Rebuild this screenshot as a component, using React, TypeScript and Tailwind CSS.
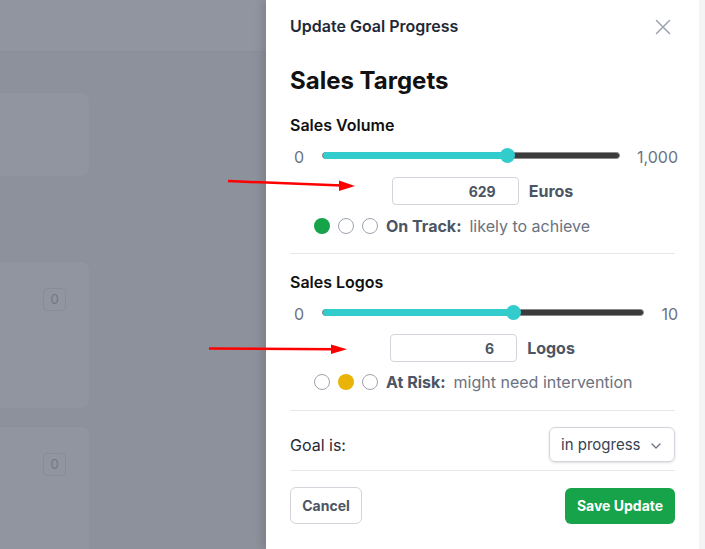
import React from "react";

function Slider({ value, max, maxLabel }: { value: number; max: number; maxLabel: string }) {
  const pct = value / max;
  return (
    <div className="flex items-center h-[24px] ml-[4px] mr-[-3px]">
      <span className="text-[16px] leading-[24px] text-[#6b7280] translate-y-[2px]">0</span>
      <div className="relative flex-1 ml-[18px] mr-[17px] h-[7px] rounded-full bg-[#3b3b3b] border border-[#8a8a8a]">
        <div
          className="absolute left-0 top-[-1px] h-[7px] rounded-full bg-[#33cccc]"
          style={{ width: `calc(${pct} * (100% - 15px) + 7.5px)` }}
        />
        <div
          className="absolute top-[-5px] w-[15px] h-[15px] rounded-full bg-[#33cccc]"
          style={{ left: `calc(${pct} * (100% - 15px))` }}
        />
      </div>
      <span className="text-[16px] leading-[24px] text-[#6b7280] translate-y-[2px]">{maxLabel}</span>
    </div>
  );
}

function NumberRow({ value, unit }: { value: string; unit: string }) {
  return (
    <div className="flex items-center justify-center gap-[10px]">
      <div className="w-[127px] h-[28px] rounded-[4px] border border-[#d1d5db] flex items-center justify-end pr-[22px] text-[14px] font-bold text-[#4b5563]">
        {value}
      </div>
      <span className="text-[16px] font-bold text-[#4b5563]">{unit}</span>
    </div>
  );
}

function Status({ active, color, label, desc }: { active: number; color: string; label: string; desc: string }) {
  return (
    <div className="flex items-center h-[24px] pl-[24px]">
      {[0, 1, 2].map((i) => (
        <span
          key={i}
          className={
            i === active
              ? `w-[16px] h-[16px] rounded-full mr-[8px] ${color}`
              : "w-[16px] h-[16px] rounded-full mr-[8px] border border-[#9ca3af] bg-white"
          }
        />
      ))}
      <span className="text-[16px] font-bold text-[#4b5563]">{label}</span>
      <span className="ml-[8px] text-[16px] text-[#6b7280]">{desc}</span>
    </div>
  );
}

function Badge() {
  return (
    <div className="w-[23px] h-[23px] rounded-[4px] border border-[#878c97] flex items-center justify-center text-[13px] text-[#737886]">
      0
    </div>
  );
}

export default function App() {
  return (
    <div
      className="relative flex w-[705px] h-[549px] overflow-hidden bg-[#8d919b]"
      style={{ fontFamily: "Inter, 'Noto Sans', sans-serif" }}
    >
      {/* Background page (dimmed) */}
      <div className="w-[266px] shrink-0 flex flex-col">
        <div className="shrink-0 h-[52px] bg-[#9095a0] border-b border-[#8a8e99]" />
        <div className="shrink-0 mt-[40px] ml-[-20px] w-[110px] h-[85px] rounded-[8px] bg-[#9095a0] border border-[#8b909b]" />
        <div className="shrink-0 mt-[84px] ml-[-20px] w-[110px] h-[148px] rounded-[8px] bg-[#9095a0] border border-[#8b909b] pt-[26px] pl-[62px]">
          <Badge />
        </div>
        <div className="shrink-0 mt-[17px] ml-[-20px] w-[110px] h-[148px] rounded-[8px] bg-[#9095a0] border border-[#8b909b] pt-[26px] pl-[62px]">
          <Badge />
        </div>
      </div>

      {/* Slide-over panel */}
      <div className="w-[433px] shrink-0 bg-white px-[24px] pt-[16px] shadow-[-4px_0_8px_rgba(0,0,0,0.12)]">
        <div className="flex items-center justify-between h-[20px]">
          <h2 className="text-[16px] leading-[20px] font-semibold text-[#1f2937]">Update Goal Progress</h2>
          <svg width="16" height="16" viewBox="0 0 16 16" className="mr-[4px] mt-[2px]">
            <path d="M1.5 1.5 L14.5 14.5 M14.5 1.5 L1.5 14.5" stroke="#9ca3af" strokeWidth="1.5" strokeLinecap="round" />
          </svg>
        </div>

        <h1 className="mt-[29px] text-[24px] leading-[32px] font-bold text-[#111111]">Sales Targets</h1>

        <h3 className="mt-[18px] text-[16px] leading-[20px] font-semibold text-[#111111]">Sales Volume</h3>
        <div className="mt-[8px]">
          <Slider value={629} max={1000} maxLabel="1,000" />
        </div>
        <div className="mt-[10px]">
          <NumberRow value="629" unit="Euros" />
        </div>
        <div className="mt-[9px]">
          <Status active={0} color="bg-[#16a34a]" label="On Track:" desc="likely to achieve" />
        </div>

        <div className="mt-[15px] border-t border-[#e5e7eb]" />

        <h3 className="mt-[18px] text-[16px] leading-[20px] font-semibold text-[#111111]">Sales Logos</h3>
        <div className="mt-[8px]">
          <Slider value={6} max={10} maxLabel="10" />
        </div>
        <div className="mt-[10px]">
          <NumberRow value="6" unit="Logos" />
        </div>
        <div className="mt-[8px]">
          <Status active={1} color="bg-[#eab308]" label="At Risk:" desc="might need intervention" />
        </div>

        <div className="mt-[16px] border-t border-[#e5e7eb]" />

        <div className="mt-[16px] flex items-center justify-between">
          <span className="text-[16px] text-[#1f2937]">Goal is:</span>
          <div className="w-[126px] h-[35px] rounded-[6px] border border-[#d1d5db] flex items-center justify-between pl-[11px] pr-[13px] pt-[2px] shadow-sm">
            <span className="text-[15px] text-[#374151]">in progress</span>
            <svg width="10" height="6" viewBox="0 0 10 6">
              <path d="M1 1 L5 5 L9 1" fill="none" stroke="#6b7280" strokeWidth="1.3" strokeLinecap="round" strokeLinejoin="round" />
            </svg>
          </div>
        </div>

        <div className="mt-[8px] border-t border-[#e5e7eb]" />

        <div className="mt-[16px] flex items-center justify-between">
          <button className="w-[72px] h-[37px] rounded-[6px] border border-[#d1d5db] text-[14px] font-bold text-[#4b5563] bg-white">
            Cancel
          </button>
          <button className="w-[110px] h-[36px] rounded-[6px] bg-[#16a34a] text-[14px] font-bold text-white">
            Save Update
          </button>
        </div>
      </div>

      <div className="w-[6px] shrink-0 bg-[#f3f4f6]" />

      {/* Red annotation arrows */}
      <svg className="absolute left-0 top-0 pointer-events-none" width="705" height="549">
        <line x1="228" y1="181" x2="342" y2="185.6" stroke="#ff0000" strokeWidth="2.5" />
        <polygon points="355,186 339,180.5 339,191" fill="#ff0000" />
        <line x1="209" y1="348.5" x2="334" y2="349.3" stroke="#ff0000" strokeWidth="2.5" />
        <polygon points="347,349.3 331,344.5 331,354" fill="#ff0000" />
      </svg>
    </div>
  );
}
